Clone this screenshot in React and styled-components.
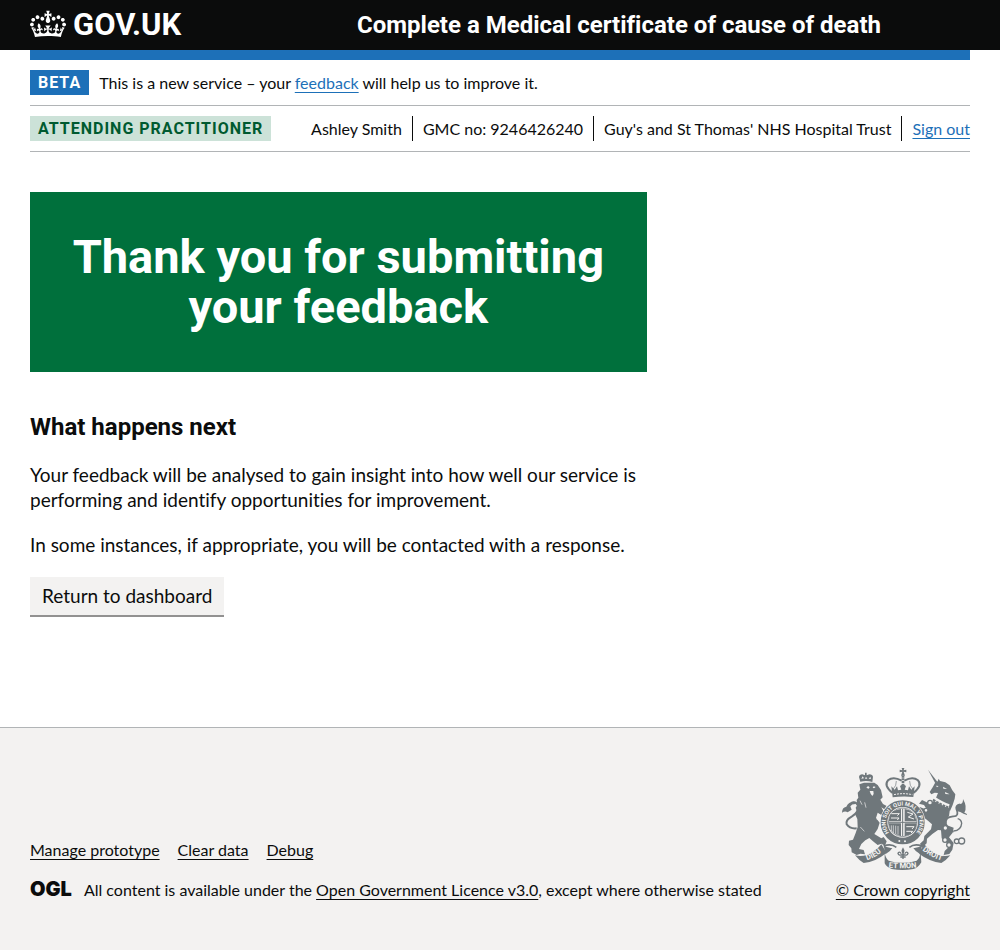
import React from "react";
import styled, { createGlobalStyle } from "styled-components";

const colour = {
  black: "#0b0c0c",
  blue: "#1d70b8",
  border: "#b1b4b6",
  grey: "#f3f2f1",
  green: "#00703c",
  crest: "#6f777b",
};

const GlobalStyle = createGlobalStyle`
  *, *::before, *::after { box-sizing: border-box; }
  body {
    margin: 0;
    background: ${colour.grey};
    color: ${colour.black};
    font-family: Lato, "Liberation Sans", sans-serif;
    font-size: 16px;
    line-height: 25px;
    font-variant-ligatures: none;
  }
`;

const Page = styled.div`
  display: flex;
  flex-direction: column;
  min-height: 100vh;
  background: #fff;
`;

const Container = styled.div`
  max-width: 960px;
  margin: 0 30px;
  @media (min-width: 1020px) {
    width: 960px;
    margin: 0 auto;
  }
`;

const Link = styled.a`
  color: ${(p) => (p.$dark ? colour.black : colour.blue)};
  text-decoration: underline;
  text-decoration-thickness: 1px;
  text-decoration-skip-ink: none;
  text-underline-offset: 3px;
`;

const Header = styled.header`
  background: ${colour.black};
  color: #fff;
`;

const HeaderRow = styled(Container)`
  display: flex;
  align-items: center;
  height: 50px;
`;

const LogoLink = styled.a`
  display: flex;
  align-items: center;
  gap: 7px;
  flex: 0 0 238px;
  color: #fff;
  text-decoration: none;
  font: 700 31px/30px Roboto, "Liberation Sans", sans-serif;
`;

const ServiceName = styled.div`
  flex: 1;
  text-align: center;
  font-family: Roboto, "Liberation Sans", sans-serif;
  font-size: 24px;
  line-height: 30px;
  font-weight: 700;
`;

const BlueBar = styled.div`
  height: 10px;
  background: ${colour.blue};
`;

const Strip = styled.div`
  display: flex;
  align-items: center;
  justify-content: ${(p) => (p.$spread ? "space-between" : "flex-start")};
  gap: 10px;
  padding: 10px 0;
  border-bottom: 1px solid ${colour.border};
`;

const Tag = styled.strong`
  padding: 0 8px;
  font: 700 16px/25px Roboto, "Liberation Sans", sans-serif;
  letter-spacing: 1px;
  text-transform: uppercase;
  color: ${(p) => (p.$green ? "#005a30" : "#fff")};
  background: ${(p) => (p.$green ? "#cce2d8" : colour.blue)};
`;

const UserList = styled.ul`
  display: flex;
  margin: 0;
  padding: 0;
  list-style: none;
`;

const UserItem = styled.li`
  padding: 0 10px;
  border-right: 1px solid ${colour.black};
  &:last-child {
    padding-right: 0;
    border-right: 0;
  }
`;

const Main = styled.main`
  padding: 40px 0 110px;
`;

const Column = styled.div`
  width: calc(66.6667% - 10px);
  @media (max-width: 640px) {
    width: 100%;
  }
`;

const Panel = styled.div`
  margin-bottom: 40px;
  padding: 40px 30px;
  background: ${colour.green};
  color: #fff;
  text-align: center;
`;

const PanelTitle = styled.h1`
  margin: 0;
  font-family: Roboto, "Liberation Sans", sans-serif;
  font-size: 47px;
  line-height: 50px;
  font-weight: 700;
  text-wrap: balance;
`;

const Heading = styled.h2`
  margin: 0 0 20px;
  font-family: Roboto, "Liberation Sans", sans-serif;
  font-size: 24px;
  line-height: 30px;
  font-weight: 700;
`;

const Paragraph = styled.p`
  margin: 0 0 20px;
  font-size: 19px;
  line-height: 25px;
`;

const Button = styled.button`
  display: block;
  margin: 0 0 2px;
  padding: 9px 12px 10px;
  border: 0;
  background: ${colour.grey};
  box-shadow: 0 2px 0 #929191;
  color: ${colour.black};
  font: 400 19px/19px Lato, "Liberation Sans", sans-serif;
  font-variant-ligatures: none;
  cursor: pointer;
`;

const Footer = styled.footer`
  flex: 1;
  padding: 40px 0 25px;
  border-top: 1px solid ${colour.border};
  background: ${colour.grey};
`;

const FooterRow = styled(Container)`
  display: flex;
  align-items: flex-end;
  justify-content: space-between;
  gap: 20px;
`;

const FooterLinks = styled.nav`
  display: flex;
  gap: 18px;
  margin-bottom: 15px;
`;

const Licence = styled.div`
  display: flex;
  align-items: center;
  gap: 12px;
`;

const OglMark = styled.span`
  font: 900 20px/25px Inter, "Liberation Sans", sans-serif;
`;

const Copyright = styled.div`
  display: flex;
  flex-direction: column;
  align-items: flex-end;
  gap: 7px;
  white-space: nowrap;
`;

const CrownIcon = styled.svg`
  width: 36px;
  height: 28px;
  margin-bottom: 3px;
  fill: currentColor;
`;

const Crown = () => (
  <CrownIcon aria-hidden="true" viewBox="0 0 132 97">
    <path d="M25 30.2c3.5 1.5 7.7-.2 9.1-3.7 1.5-3.6-.2-7.8-3.9-9.2-3.6-1.4-7.6.3-9.1 3.9-1.4 3.5.3 7.5 3.9 9zM9 39.5c3.6 1.5 7.8-.2 9.2-3.7 1.5-3.6-.2-7.8-3.9-9.1-3.6-1.5-7.6.2-9.1 3.8-1.4 3.5.3 7.5 3.8 9zM4.4 57.2c3.5 1.5 7.7-.2 9.1-3.8 1.5-3.6-.2-7.7-3.9-9.1-3.5-1.5-7.6.3-9.1 3.8-1.4 3.5.3 7.6 3.9 9.1zm38.3-21.4c3.5 1.5 7.7-.2 9.1-3.8 1.5-3.6-.2-7.7-3.9-9.1-3.6-1.5-7.6.3-9.1 3.8-1.3 3.6.4 7.7 3.9 9.1zm64.4-5.6c-3.6 1.5-7.8-.2-9.1-3.7-1.5-3.6.2-7.8 3.8-9.2 3.6-1.4 7.7.3 9.2 3.9 1.3 3.5-.4 7.5-3.9 9zm15.9 9.3c-3.6 1.5-7.7-.2-9.1-3.7-1.5-3.6.2-7.8 3.7-9.1 3.6-1.5 7.7.2 9.2 3.8 1.5 3.5-.3 7.5-3.8 9zm4.7 17.7c-3.6 1.5-7.8-.2-9.2-3.8-1.5-3.6.2-7.7 3.9-9.1 3.6-1.5 7.7.3 9.2 3.8 1.3 3.5-.4 7.6-3.9 9.1zM89.3 35.8c-3.6 1.5-7.8-.2-9.2-3.8-1.4-3.6.2-7.7 3.9-9.1 3.6-1.5 7.7.3 9.2 3.8 1.4 3.6-.3 7.7-3.9 9.1zM69.7 17.7l8.9 4.7V9.3l-8.9 2.8c-.2-.3-.5-.6-.9-.9L72.4 0H59.6l3.5 11.2c-.3.3-.6.5-.9.9l-8.8-2.8v13.1l8.8-4.7c.3.3.6.7.9.9l-5 15.4v.1c-.2.8-.4 1.6-.4 2.4 0 4.1 3.1 7.5 7 8.1h.2c.3 0 .7.1 1 .1.4 0 .7 0 1-.1h.2c4-.6 7.1-4.1 7.1-8.1 0-.8-.1-1.7-.4-2.4V34l-5.1-15.4c.4-.2.7-.6 1-.9zM66 92.8c16.9 0 32.8 1.1 47.1 3.2 4-16.9 8.9-26.7 14-33.5l-9.6-3.4c1 4.9 1.1 7.2 0 10.2-1.5-1.4-3-4.3-4.2-8.7L108.6 76c2.8-2 5-3.2 7.5-3.3-4.4 9.4-10 11.9-13.6 11.2-4.3-.8-6.3-4.6-5.6-7.9 1-4.7 5.7-5.9 8-.5 4.3-8.7-3-11.4-7.6-8.8 7.1-7.2 7.9-13.5 2.1-21.1-8 6.1-8.1 12.3-4.5 20.8-4.7-5.4-12.1-2.5-9.5 6.2 3.4-5.2 7.9-2 7.2 3.1-.6 4.3-6.4 7.8-13.5 7.2-10.3-.9-10.9-8-11.2-13.8 2.5-.5 7.1 1.8 11 7.3L80.2 60c-4.1 4.4-8 5.3-12.3 5.4 1.4-4.4 8-11.6 8-11.6H55.5s6.4 7.2 7.9 11.6c-4.2-.1-8-1-12.3-5.4l1.4 16.4c3.9-5.5 8.5-7.7 10.9-7.3-.3 5.8-.9 12.8-11.1 13.8-7.2.6-12.9-2.9-13.5-7.2-.7-5 3.8-8.3 7.1-3.1 2.7-8.7-4.6-11.6-9.4-6.2 3.7-8.5 3.6-14.7-4.6-20.8-5.8 7.6-5 13.9 2.2 21.1-4.7-2.6-11.9.1-7.7 8.8 2.3-5.5 7.1-4.2 8.1.5.7 3.3-1.3 7.1-5.7 7.9-3.5.7-9-1.8-13.5-11.2 2.5.1 4.7 1.3 7.5 3.3l-4.7-15.4c-1.2 4.4-2.7 7.2-4.3 8.7-1.1-3-.9-5.3 0-10.2l-9.5 3.4c5 6.9 9.9 16.7 14 33.6 14.8-2.1 30.8-3.2 47.7-3.2z" />
  </CrownIcon>
);

const Motto = styled.text`
  fill: ${colour.grey};
  font: 700 ${(p) => (p.$small ? 17 : 23)}px Roboto, "Liberation Sans", sans-serif;
  text-anchor: middle;
`;

const Crest = () => (
  <svg aria-hidden="true" viewBox="33 24 387 306" width="129" height="102" fill={colour.crest} stroke="none">
    <defs>
      <path id="garter" d="M188 229 A51 51 0 1 1 248 229" />
      <path id="dieu" d="M98 304 Q138 296 164 267" />
      <path id="droit" d="M266 262 Q304 296 348 305" />
      <path id="etmon" d="M164 321 Q218 329 272 321" />
    </defs>

    {/* lion: crown, mane and face, body, legs, tail */}
    <path d="M91 65 L87 51 Q88 43 97 43 L105 46 L105 38 L110 38 L110 46 L118 43 Q128 44 129 50 L127 66 Q110 60 91 65Z" />
    <path d="M94 56 l4-7 4 6z M105 56 l3-6 4 6z M116 56 l5-6 2 7z" fill={colour.grey} />
    <path d="M88 73 L102 68 L133 68 L143 75 L153 90 L158 112 L151 119 L159 132 L170 138 L163 148 L154 142 L162 157 L154 165 L143 158 L138 174 L149 188 L143 207 L133 222 L154 235 L161 231 L170 244 L165 257 L154 251 L143 255 L129 244 L118 234 L106 241 L94 252 L87 267 L101 270 L105 283 L91 281 L80 285 L65 277 L64 265 L56 255 L57 242 L69 239 L77 219 L83 201 L82 177 L76 164 L80 153 L77 143 L82 135 L80 120 L85 113 L83 98 L91 89Z" />
    <path d="M114 78 L119 82 L116 86 L109 83Z M131 79 L137 81 L132 85 L128 83Z M119 93 L130 93 L131 102 L127 108 L122 101Z" fill={colour.grey} />
    <path d="M90 122 L96 134 M104 127 L108 143 M91 201 L103 214 M149 165 L141 180" fill="none" stroke={colour.grey} strokeWidth="2" />
    <path d="M80 205 Q59 207 50 193 Q46 180 66 169 Q88 155 84 137 Q79 124 65 128" fill="none" stroke={colour.crest} strokeWidth="6" />
    <path d="M73 125 Q56 124 49 140 Q36 142 36 158 Q45 152 53 157 L65 149 L61 139 Q65 132 76 132Z" />

    {/* unicorn: horn, head and mane, collar, body, legs, tail */}
    <path d="M294 29 L322 65 L316 70Z" />
    <path d="M315 69 L323 64 L326 56 L330 63 L346 67 L359 76 L367 91 L376 103 L374 116 L368 135 L360 153 L344 137 L313 125 L324 99 L314 98 L304 103 L299 96 L308 82Z" />
    <path d="M318 77 l8 1 -5 4z M339 80 l12 7 -11-1z M345 96 l14 7 -13-1z" fill={colour.grey} />
    <path d="M311 116 Q336 133 357 139" fill="none" stroke={colour.grey} strokeWidth="13" />
    <path d="M309 119 Q334 135 355 142" fill="none" stroke={colour.crest} strokeWidth="6" strokeDasharray="8 3" />
    <path d="M311 123 L339 137 L360 146 L357 168 L347 186 L351 196 L371 203 L368 218 L357 232 L371 249 L367 269 L358 282 L341 285 L344 273 L354 263 L350 248 L335 235 L333 211 L324 210 L307 222 L291 236 L290 250 L276 263 L270 251 L281 241 L283 228 L303 208 L306 193 L294 182 L279 170 L273 157 L260 148 L269 141 L291 149 L282 135 L267 131 L276 120 L301 132Z" />
    <path d="M371 215 Q353 211 348 191 Q345 171 369 169 Q389 170 379 147 Q376 136 390 133" fill="none" stroke={colour.crest} strokeWidth="5" />
    <path d="M378 153 Q376 136 388 132 Q400 133 399 117 Q413 141 403 158 Q412 160 411 165 Q400 162 391 156Z" />
    <path d="M371 213 Q393 211 395 190 Q394 179 383 176" fill="none" stroke={colour.crest} strokeWidth="4" />
    <g fill={colour.grey} stroke={colour.crest} strokeWidth="4">
      <circle cx="300" cy="128" r="7" /><circle cx="288" cy="151" r="6" />
      <circle cx="346" cy="204" r="7" /><circle cx="345" cy="240" r="7" />
      <circle cx="357" cy="255" r="7" /><circle cx="380" cy="244" r="7" />
      <circle cx="395" cy="243" r="9" />
    </g>

    {/* royal crown */}
    <path d="M215 24 h8 l-2 7 8-2 v8 l-8-2 4 12 h-12 l4-12 -8 2 v-8 l8 2z" />
    <g fill="none" stroke={colour.crest} strokeWidth="6">
      <path d="M188 99 Q160 77 174 61 Q190 48 215 62" />
      <path d="M250 99 Q278 77 264 61 Q248 48 223 62" />
      <path d="M219 47 V92" strokeWidth="8" strokeDasharray="6 2" />
      <path d="M187 91 Q201 75 199 63 M251 91 Q237 75 239 63" strokeWidth="2" />
    </g>
    <path d="M184 79 l10 10 7-10 3 12 10-2 -4-11 9-6 9 6 -4 11 10 2 3-12 7 10 10-10 -4 32 Q219 107 188 112Z" />
    <path d="M192 104 Q219 98 247 104" fill="none" stroke={colour.grey} strokeWidth="3" strokeDasharray="6 3" />

    {/* garter and quartered shield */}
    <circle cx="218" cy="187" r="68" fill={colour.grey} />
    <circle cx="218" cy="187" r="56" fill="none" stroke={colour.crest} strokeWidth="20" />
    <circle cx="218" cy="187" r="43" fill="none" stroke={colour.crest} strokeWidth="2" />
    <path d="M180 165 l9-11 13-5 11-2 v37 h-37z M224 147 l14 4 14 10 8 23 h-36z M176 190 h37 v39 l-19-8 -14-14z M224 190 h36 l-4 19 -13 14 -19 6z" />
    <path d="M218 146 V229 M175 187 H261" stroke={colour.crest} strokeWidth="3" />
    <g fill="none" stroke={colour.grey} strokeWidth="3">
      <path d="M184 161 h24 l-6 6 M183 174 h24 l-5 6 M232 157 l17 5 -14 9 17 6 M229 200 h23 l-6 7 M229 214 h19 l-5 5" />
      <path d="M184 196 V213 M190 196 V219 M197 197 V222 M204 198 V224" strokeWidth="2" />
    </g>
    <Motto $small><textPath href="#garter" startOffset="50%">HONI SOIT QUI MAL Y PENSE</textPath></Motto>
    <circle cx="208" cy="243" r="3" fill={colour.grey} />
    <circle cx="225" cy="244" r="3" fill={colour.grey} />

    {/* ribbons with the motto, fleur-de-lis between them */}
    <path d="M75 286 Q105 292 128 276 Q145 266 154 253 L165 271 L166 281 Q137 305 101 309 Q86 300 75 286Z" />
    <path d="M361 286 Q331 292 309 276 Q292 266 283 253 L271 271 L268 282 Q299 305 334 309 Q349 301 361 286Z" />
    <path d="M161 258 Q184 250 199 262 M276 258 Q253 250 238 262" fill="none" stroke={colour.crest} strokeWidth="5" />
    <path d="M161 256 Q174 266 187 264 Q181 275 166 283Z M276 256 Q262 266 250 264 Q256 275 271 283Z" />
    <path d="M164 280 Q168 297 176 302 Q218 315 260 302 Q269 295 272 280 L274 307 Q264 324 250 327 Q218 333 185 327 Q169 321 164 310Z" />
    <g fill="none" stroke={colour.crest} strokeWidth="4">
      <path d="M219 297 V270 M219 283 Q206 289 204 280 Q207 272 214 281 M219 283 Q232 289 234 280 Q231 272 224 281 M211 291 H227" />
      <path d="M219 263 q8 10 0 18 q-8-8 0-18" fill={colour.crest} strokeWidth="1" />
    </g>
    <Motto><textPath href="#dieu" startOffset="50%">DIEU</textPath></Motto>
    <Motto><textPath href="#etmon" startOffset="50%">ET MON</textPath></Motto>
    <Motto><textPath href="#droit" startOffset="50%">DROIT</textPath></Motto>
  </svg>
);

export default function App() {
  return (
    <Page>
      <GlobalStyle />
      <Header>
        <HeaderRow>
          <LogoLink href="#home"><Crown />GOV.UK</LogoLink>
          <ServiceName>Complete a Medical certificate of cause of death</ServiceName>
        </HeaderRow>
      </Header>
      <Container>
        <BlueBar />
        <Strip>
          <Tag>Beta</Tag>
          <span>This is a new service – your <Link href="#feedback">feedback</Link> will help us to improve it.</span>
        </Strip>
        <Strip $spread>
          <Tag $green>Attending practitioner</Tag>
          <UserList>
            <UserItem>Ashley Smith</UserItem>
            <UserItem>GMC no: 9246426240</UserItem>
            <UserItem>Guy's and St Thomas' NHS Hospital Trust</UserItem>
            <UserItem><Link href="#sign-out">Sign out</Link></UserItem>
          </UserList>
        </Strip>
        <Main>
          <Column>
            <Panel>
              <PanelTitle>Thank you for submitting your feedback</PanelTitle>
            </Panel>
            <Heading>What happens next</Heading>
            <Paragraph>
              Your feedback will be analysed to gain insight into how well our service is
              performing and identify opportunities for improvement.
            </Paragraph>
            <Paragraph>In some instances, if appropriate, you will be contacted with a response.</Paragraph>
            <Button type="button">Return to dashboard</Button>
          </Column>
        </Main>
      </Container>
      <Footer>
        <FooterRow>
          <div>
            <FooterLinks>
              <Link $dark href="#manage">Manage prototype</Link>
              <Link $dark href="#clear">Clear data</Link>
              <Link $dark href="#debug">Debug</Link>
            </FooterLinks>
            <Licence>
              <OglMark>OGL</OglMark>
              <span>
                All content is available under the <Link $dark href="#licence">Open Government Licence v3.0</Link>, except where otherwise stated
              </span>
            </Licence>
          </div>
          <Copyright>
            <Crest />
            <Link $dark href="#copyright">© Crown copyright</Link>
          </Copyright>
        </FooterRow>
      </Footer>
    </Page>
  );
}
